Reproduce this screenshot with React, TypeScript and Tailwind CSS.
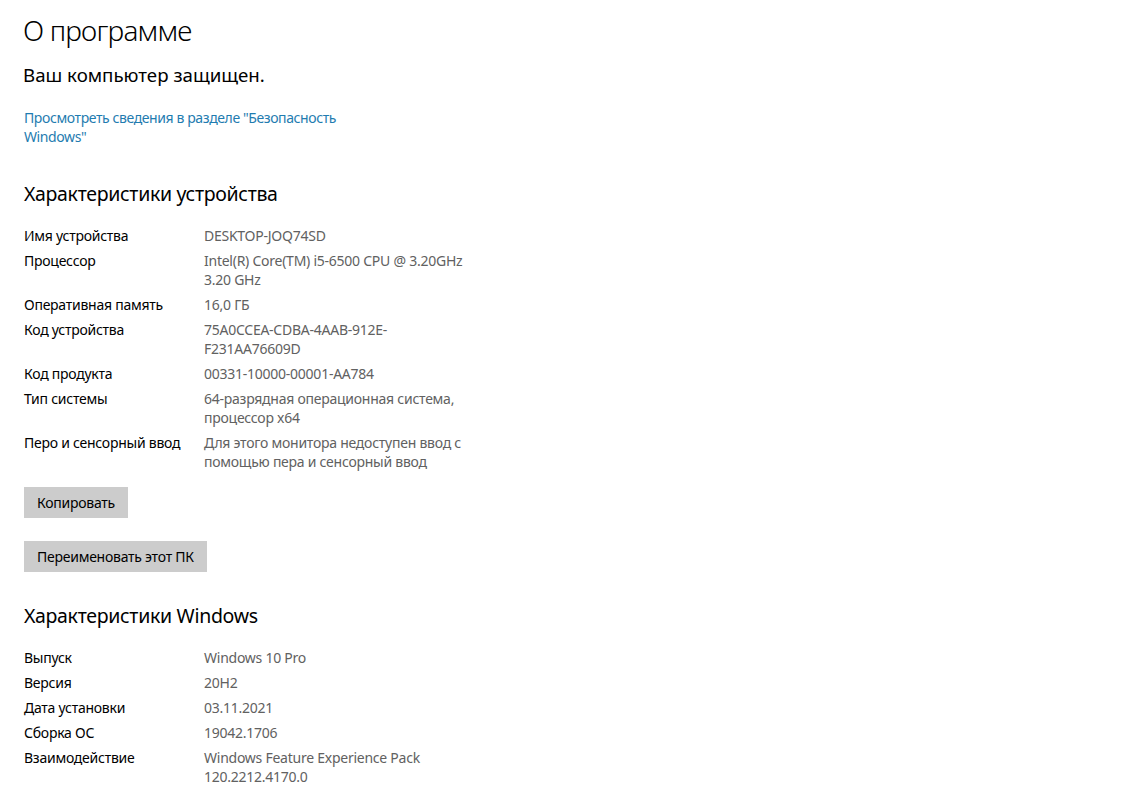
const deviceSpecs: [string, string[]][] = [
  ["Имя устройства", ["DESKTOP-JOQ74SD"]],
  ["Процессор", ["Intel(R) Core(TM) i5-6500 CPU @ 3.20GHz", "3.20 GHz"]],
  ["Оперативная память", ["16,0 ГБ"]],
  ["Код устройства", ["75A0CCEA-CDBA-4AAB-912E-", "F231AA76609D"]],
  ["Код продукта", ["00331-10000-00001-AA784"]],
  ["Тип системы", ["64-разрядная операционная система,", "процессор x64"]],
  ["Перо и сенсорный ввод", ["Для этого монитора недоступен ввод с", "помощью пера и сенсорный ввод"]],
];

const windowsSpecs: [string, string[]][] = [
  ["Выпуск", ["Windows 10 Pro"]],
  ["Версия", ["20H2"]],
  ["Дата установки", ["03.11.2021"]],
  ["Сборка ОС", ["19042.1706"]],
  ["Взаимодействие", ["Windows Feature Experience Pack", "120.2212.4170.0"]],
];

const SpecList = ({ rows }: { rows: [string, string[]][] }) => (
  <div className="flex flex-col gap-[6px]">
    {rows.map(([label, lines]) => (
      <div key={label} className="flex text-[14px] leading-[19px] tracking-[-0.25px]">
        <div className="w-[180px] shrink-0 text-black">{label}</div>
        <div className="text-[#616161]">
          {lines.map((line) => (
            <div key={line}>{line}</div>
          ))}
        </div>
      </div>
    ))}
  </div>
);

export default function App() {
  return (
    <div
      className="min-h-screen bg-white pl-[24px] pt-[12px]"
      style={{ fontFamily: '"Noto Sans", sans-serif' }}
    >
      <h1 className="text-[28px] font-light leading-[36px] tracking-[-0.8px] text-black -ml-[1px]">
        О программе
      </h1>
      <p className="mt-[15px] text-[18.7px] leading-[24px] text-black -ml-[1px]">
        Ваш компьютер защищен.
      </p>
      <a className="mt-[21px] block w-[330px] text-[14px] leading-[19px] tracking-[-0.4px] text-[#1f7cb0]">
        Просмотреть сведения в разделе "Безопасность Windows"
      </a>

      <h2 className="mt-[34px] text-[19.5px] leading-[28px] tracking-[-0.3px] text-black">
        Характеристики устройства
      </h2>
      <div className="mt-[18px]">
        <SpecList rows={deviceSpecs} />
      </div>

      <div className="mt-[16px] flex flex-col items-start gap-[23px]">
        <button className="h-[31px] bg-[#cccccc] px-[13px] text-[14px] tracking-[-0.25px] text-black">
          Копировать
        </button>
        <button className="h-[31px] bg-[#cccccc] px-[13px] text-[14px] tracking-[-0.25px] text-black">
          Переименовать этот ПК
        </button>
      </div>

      <h2 className="mt-[30px] text-[19.5px] leading-[28px] tracking-[-0.3px] text-black">
        Характеристики Windows
      </h2>
      <div className="mt-[18px]">
        <SpecList rows={windowsSpecs} />
      </div>
    </div>
  );
}
